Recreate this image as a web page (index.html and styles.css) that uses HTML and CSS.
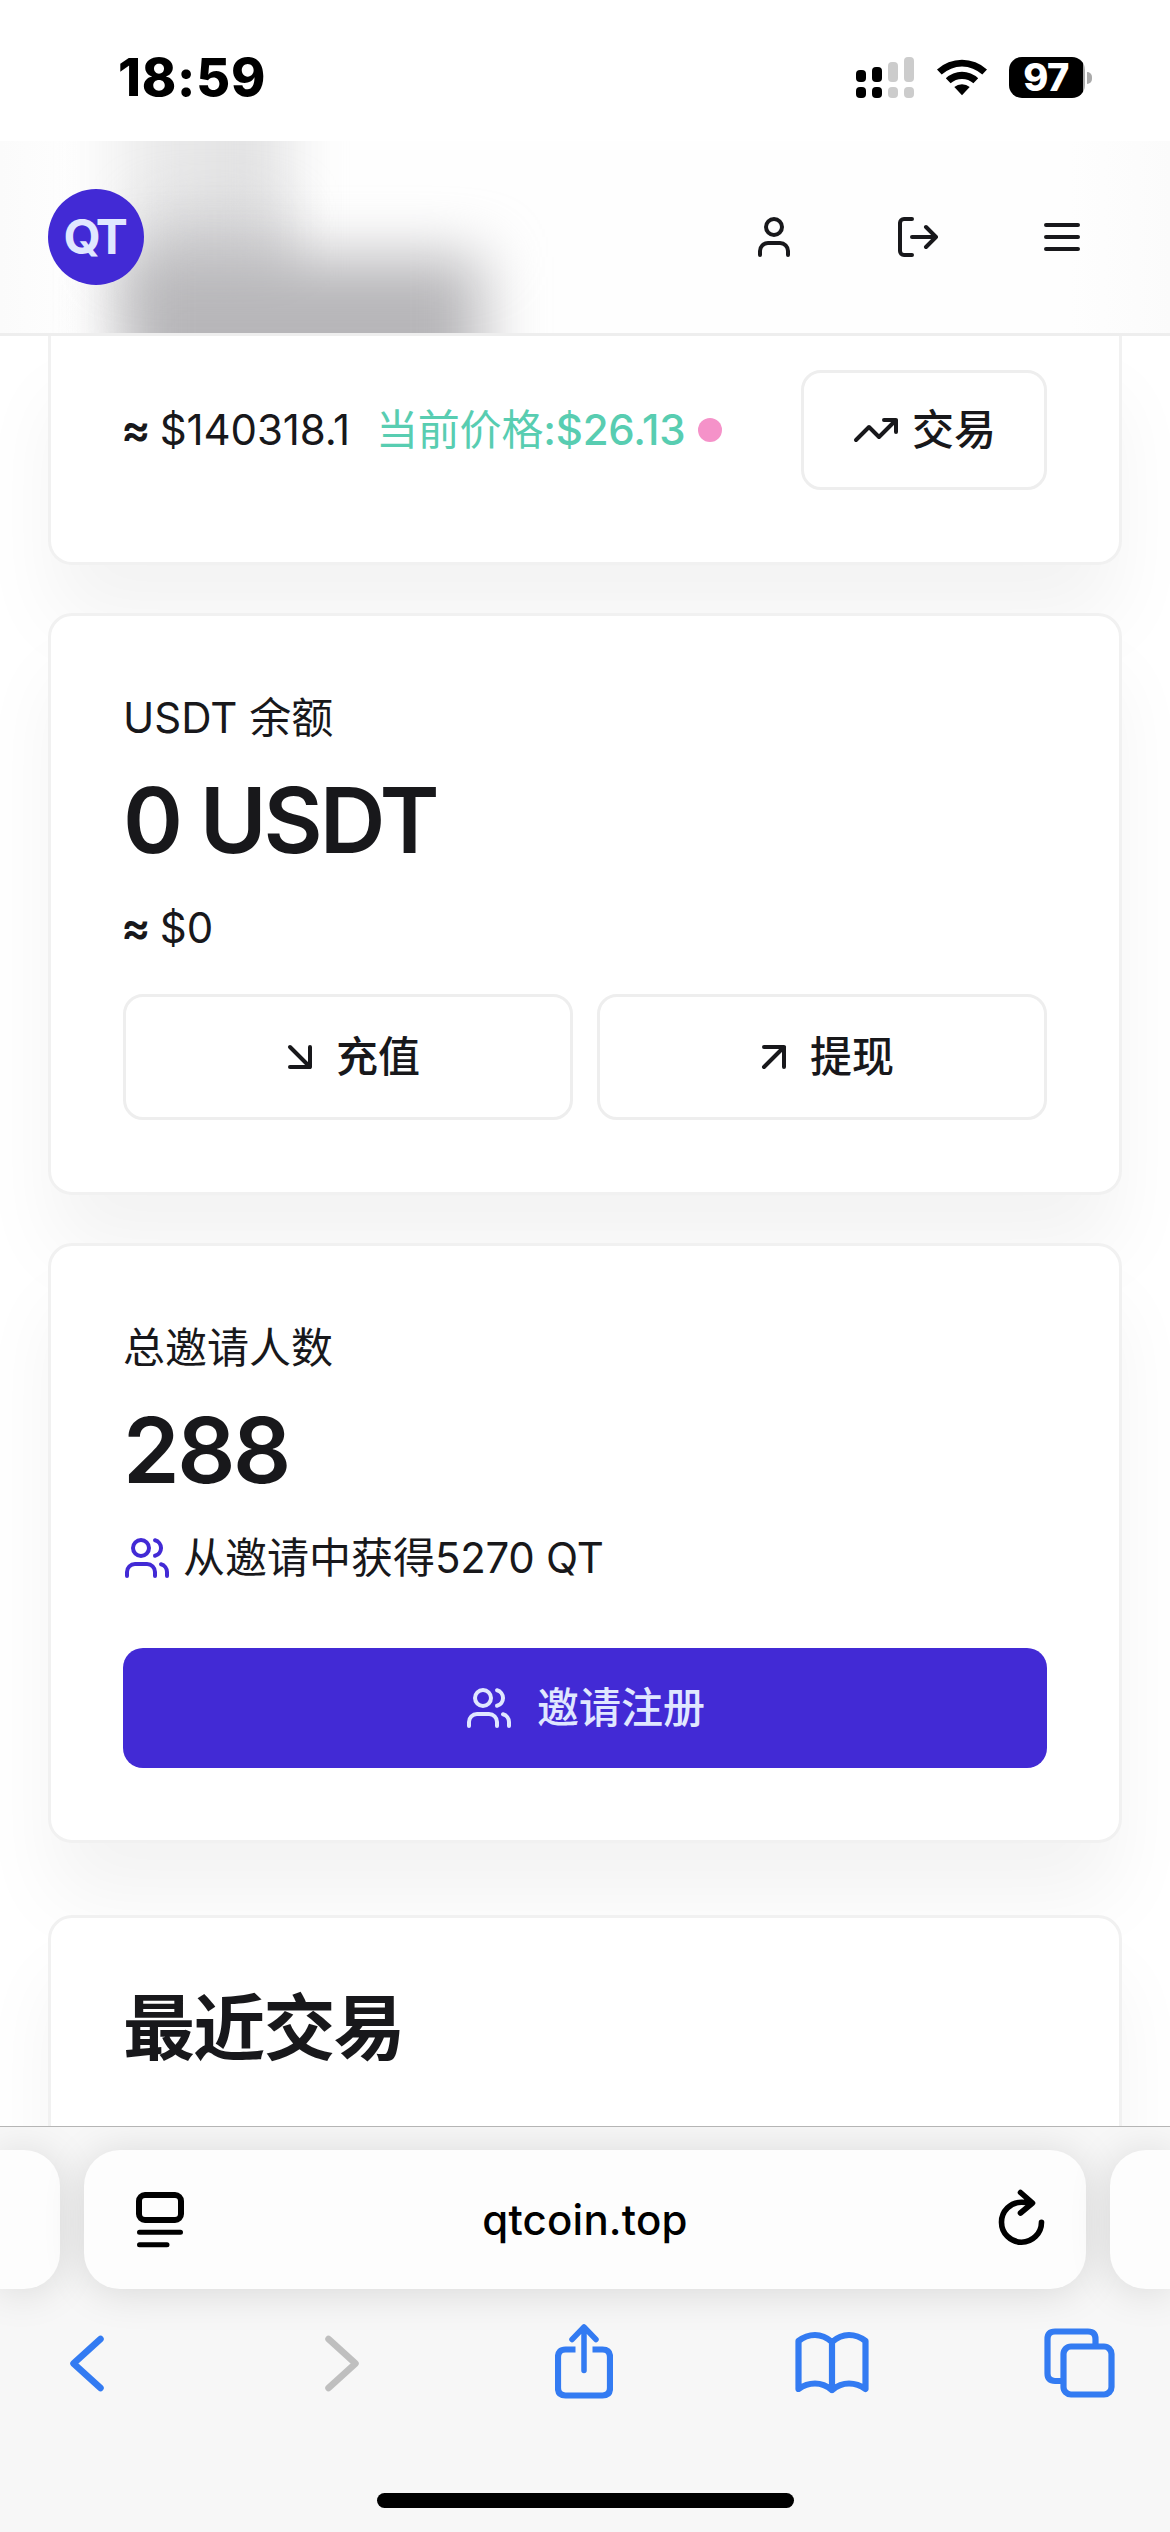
FILE: index.html
```html
<!DOCTYPE html>
<html lang="zh-CN">
<head>
<meta charset="utf-8">
<title>QT</title>
<link rel="stylesheet" href="styles.css">
</head>
<body>
<svg class="defs" width="0" height="0">
  <symbol id="users" viewBox="0 0 24 24"><path d="M16 21v-2a4 4 0 0 0-4-4H6a4 4 0 0 0-4 4v2"/><circle cx="9" cy="7" r="4"/><path d="M22 21v-2a4 4 0 0 0-3-3.87"/><path d="M16 3.13a4 4 0 0 1 0 7.75"/></symbol>
</svg>

<div class="status">
  <span class="time">18:59</span>
  <div class="status-icons">
    <svg class="signal" width="58" height="41" viewBox="0 0 58 41">
      <rect x="0" y="13" width="10" height="12" rx="4"/><rect x="16" y="10" width="10" height="15" rx="4"/>
      <rect x="0" y="30" width="10" height="11" rx="4"/><rect x="16" y="30" width="10" height="11" rx="4"/>
      <g fill="#ccc"><rect x="32" y="5" width="10" height="20" rx="4"/><rect x="48" y="0" width="10" height="25" rx="4"/><rect x="32" y="30" width="10" height="11" rx="4"/><rect x="48" y="30" width="10" height="11" rx="4"/></g>
    </svg>
    <svg class="wifi" width="52" height="38" viewBox="0 0 52 38">
      <path d="M1 11.500A37 37 0 0 1 51 11.500L46.300 16.500A30 30 0 0 0 5.700 16.500Z"/>
      <path d="M9.800 20.300A23.500 23.500 0 0 1 42.200 20.300L37.400 25.300A17 17 0 0 0 14.600 25.300Z"/>
      <path d="M18.300 29.100A11.500 11.500 0 0 1 33.700 29.100L26 37.200Z"/>
    </svg>
    <div class="battery"><span class="level">97</span><span class="nub"></span></div>
  </div>
</div>

<header class="navbar">
  <div class="haze"><i class="haze-top"></i><i class="haze-middle"></i><i class="haze-bottom"></i></div>
  <div class="logo">QT</div>
  <nav class="nav">
    <svg class="icon" viewBox="0 0 24 24"><path d="M19 21v-2a4 4 0 0 0-4-4H9a4 4 0 0 0-4 4v2"/><circle cx="12" cy="7" r="4"/></svg>
    <svg class="icon" viewBox="0 0 24 24"><path d="M9 21H5a2 2 0 0 1-2-2V5a2 2 0 0 1 2-2h4M16 17l5-5-5-5M21 12H9"/></svg>
    <svg class="icon" viewBox="0 0 24 24"><path d="M4 6h16M4 12h16M4 18h16"/></svg>
  </nav>
</header>

<main class="page">
  <section class="card card-qt">
    <span class="worth"><b class="approx">≈</b> $140318.1</span>
    <span class="price">当前价格<b>:$26.13</b></span>
    <i class="dot"></i>
    <button class="btn btn-trade"><svg class="icon" viewBox="0 0 24 24"><path d="M22 7l-8.500 8.500-5-5L2 17M16 7h6v6"/></svg>交易</button>
  </section>

  <section class="card">
    <div class="label usdt">USDT 余额</div>
    <div class="value">0 USDT</div>
    <div class="desc"><b class="approx">≈</b> $0</div>
    <div class="actions">
      <button class="btn"><svg class="icon" viewBox="0 0 24 24"><path d="M7 7l10 10M17 7v10H7"/></svg>充值</button>
      <button class="btn"><svg class="icon" viewBox="0 0 24 24"><path d="M7 7h10v10M7 17L17 7"/></svg>提现</button>
    </div>
  </section>

  <section class="card">
    <div class="label">总邀请人数</div>
    <div class="value count">288</div>
    <div class="desc invited"><svg class="icon"><use href="#users"/></svg><span>从邀请中获得<span class="earned">5270 QT</span></span></div>
    <button class="btn btn-primary"><svg class="icon"><use href="#users"/></svg>邀请注册</button>
  </section>

  <section class="card card-recent">
    <h2>最近交易</h2>
  </section>
</main>

<footer class="browser">
  <div class="tabs">
    <div class="tab tab-prev"></div>
    <div class="tab tab-current">
      <svg width="48" height="56" viewBox="0 0 48 56" fill="none" stroke="#000" stroke-linecap="round"><rect x="3" y="3" width="42" height="25" rx="6" stroke-width="6"/><path d="M3.500 40.200h41M3.500 52.700h27.500" stroke-width="5"/></svg>
      <span class="url">qtcoin.top</span>
      <svg width="48" height="56" viewBox="0 0 48 56" fill="none" stroke="#000" stroke-width="5.600" stroke-linecap="round" stroke-linejoin="round"><path d="M43.500 33.200A20 20 0 1 1 23.500 13.200Q29 13.200 34 14M22.500 3.500l12 10.500-12 10"/></svg>
    </div>
    <div class="tab tab-next"></div>
  </div>
  <div class="toolbar">
    <svg width="34" height="80" viewBox="0 0 34 80"><path d="M30.500 19L3.500 43.500l27 24.500" stroke-width="6.500"/></svg>
    <svg class="off" width="34" height="80" viewBox="0 0 34 80"><path d="M3.500 19L30.500 43.500 3.500 68" stroke-width="6.500"/></svg>
    <svg width="58" height="80" viewBox="0 0 58 80"><path stroke-linecap="butt" d="M20.500 29.500H10.500Q3 29.500 3 37V68Q3 75.500 10.500 75.500H47.500Q55 75.500 55 68V37Q55 29.500 47.500 29.500H37.500"/><path stroke-width="5.500" d="M29 50.500V8M17 19.500L29 7l12 12.500"/></svg>
    <svg width="74" height="80" viewBox="0 0 74 80"><path d="M37 22Q29 15 20 15T3.500 21V69Q11 63.500 20 63.500T37 70Q45 63.500 54 63.500T70.500 69V21Q63 15 54 15T37 22V70"/></svg>
    <svg width="71" height="80" viewBox="0 0 71 80"><path stroke-linecap="butt" d="M17 61H11Q3.500 61 3.500 53.500V19Q3.500 11.500 11 11.500H44Q51.500 11.500 51.500 19V25"/><rect x="19.500" y="26.500" width="48" height="48" rx="7.500"/></svg>
  </div>
  <div class="home"></div>
</footer>
</body>
</html>
```

FILE: styles.css
```css
* { box-sizing: border-box; }
body {
  margin: 0;
  width: 1170px;
  height: 2532px;
  overflow: hidden;
  display: flex;
  flex-direction: column;
  background: #fff;
  color: #18181b;
  font: 400 42px/60px Inter, "Noto Sans CJK SC", sans-serif;
}
.defs { position: absolute; }
.icon {
  width: 48px;
  height: 48px;
  flex: none;
  fill: none;
  stroke: currentColor;
  stroke-width: 2;
  stroke-linecap: round;
  stroke-linejoin: round;
}

.status {
  height: 141px;
  flex: none;
  display: flex;
  justify-content: space-between;
  padding: 48px 78px 0 118px;
  color: #000;
}
.time { font-size: 52px; font-weight: 800; letter-spacing: 0.8px; }
.status-icons { display: flex; align-items: flex-start; padding-top: 9px; }
.wifi { margin: 1px 21px 0 22px; }
.battery { display: flex; align-items: center; height: 41px; }
.level {
  width: 76px;
  height: 41px;
  border-radius: 13px;
  background: linear-gradient(90deg, #000 74px, #aaa 74px);
  color: #fff;
  font-size: 38px;
  font-weight: 800;
  line-height: 41px;
  text-align: center;
  letter-spacing: -0.5px;
  padding-right: 2px;
}
.nub { width: 5px; height: 12px; margin-left: 2px; border-radius: 0 6px 6px 0; background: #aaa; }

.navbar {
  position: relative;
  height: 195px;
  flex: none;
  display: flex;
  align-items: center;
  justify-content: space-between;
  padding: 0 84px 0 48px;
  border-bottom: 3px solid #eee;
  background: linear-gradient(90deg, #fbfbfb, #fefefe 80px, #fefefe 1070px, #fbfbfb);
  overflow: hidden;
}
.haze { position: absolute; inset: 0; }
.haze i { position: absolute; filter: blur(28px); }
.haze-top {
  left: 112px;
  top: -80px;
  width: 176px;
  height: 260px;
  background: linear-gradient(90deg, #efefef, #dfdfe0);
}
.haze .haze-middle {
  left: 150px;
  top: 70px;
  width: 130px;
  height: 100px;
  background: #d4d4d6;
}
.haze .haze-bottom {
  left: 124px;
  top: 116px;
  width: 358px;
  height: 200px;
  background: #b7b6b9;
  filter: blur(30px);
}
.logo {
  position: relative;
  width: 96px;
  height: 96px;
  border-radius: 50%;
  background: #422ad5;
  color: #e0e7ff;
  font-size: 48px;
  font-weight: 700;
  line-height: 96px;
  text-align: center;
  letter-spacing: -3.5px;
  padding-right: 4px;
}
.nav { position: relative; display: flex; gap: 96px; }

.page { flex: 1; min-height: 0; overflow: hidden; padding: 0 48px; }
.card {
  border: 3px solid #f1f1f1;
  border-radius: 24px;
  background: #fff;
  padding: 72px;
  margin-bottom: 48px;
  box-shadow: 0 60px 80px -4px rgba(0, 0, 0, .05);
}
.card-qt {
  display: flex;
  align-items: center;
  height: 229px;
  padding: 34px 72px 72px;
  border-top: 0;
  border-radius: 0 0 24px 24px;
}
b { font-weight: 500; }
.approx {
  display: inline-block;
  width: 25px;
  margin-right: 0;
  font-weight: 600;
  font-size: 44px;
  line-height: 44px;
  text-indent: -2px;
}
.worth { width: 253px; height: 60px; white-space: nowrap; letter-spacing: -0.1px; }
.desc { height: 60px; }
.price { color: #58cdb1; white-space: nowrap; letter-spacing: -0.2px; }
.dot { width: 24px; height: 24px; margin-left: 13px; border-radius: 50%; background: #f592c9; }
.btn {
  display: flex;
  align-items: center;
  justify-content: center;
  gap: 12px;
  height: 126px;
  padding: 0;
  border: 3px solid #eee;
  border-radius: 20px;
  background: #fff;
  color: inherit;
  font: inherit;
  font-weight: 500;
}
.btn-trade { width: 246px; height: 120px; margin-left: auto; }
.value { margin: 24px 0 30px; font-size: 91px; font-weight: 600; line-height: 96px; letter-spacing: -3.1px; }
.count { letter-spacing: -2.5px; }
.actions { display: grid; grid-template-columns: 1fr 1fr; gap: 24px; margin-top: 36px; }
.invited { display: flex; align-items: center; gap: 12px; }
.invited .icon { color: #422ad5; }
.earned { letter-spacing: -0.3px; }
.btn-primary {
  width: 100%;
  height: 120px;
  margin-top: 60px;
  gap: 24px;
  border: 0;
  background: #422ad5;
  color: #e0e7ff;
}
.card-recent { margin-top: 72px; height: 400px; }
h2 { margin: 0; font-size: 72px; line-height: 76px; font-weight: 600; letter-spacing: -1.8px; }

.browser {
  position: relative;
  height: 406px;
  flex: none;
  border-top: 1px solid #b5b5b5;
  background: #f7f7f7;
  color: #000;
  overflow: hidden;
}
.tabs { display: flex; gap: 24px; padding-top: 23px; }
.tab { height: 139px; background: #fdfdfd; box-shadow: 0 3px 42px rgba(0, 0, 0, .13); }
.tab-prev { width: 60px; border-radius: 0 36px 36px 0; }
.tab-next { width: 60px; border-radius: 36px 0 0 36px; }
.tab-current {
  width: 1002px;
  border-radius: 36px;
  display: flex;
  align-items: center;
  justify-content: space-between;
  padding: 0 40px 0 52px;
}
.tab-current svg:last-child { margin-top: -6px; }
.url { font-weight: 550; letter-spacing: 0.2px; margin-right: 12px; }
.toolbar {
  position: relative;
  display: grid;
  grid-template-columns: 255px 230px 240px 249px 71px;
  padding: 31px 0 0 70px;
}
.toolbar svg { fill: none; stroke: #337bf2; stroke-width: 6.2; stroke-linecap: round; stroke-linejoin: round; }
.toolbar .off { stroke: #bfbfbf; }
.home { width: 417px; height: 15px; margin: 93px auto 0; border-radius: 8px; background: #000; }
```
